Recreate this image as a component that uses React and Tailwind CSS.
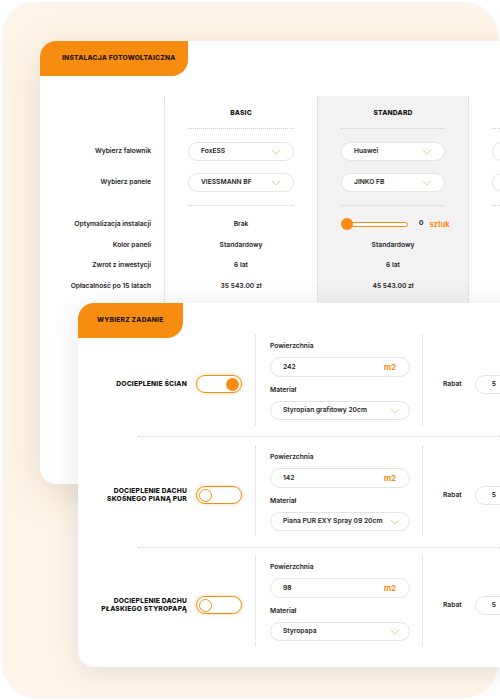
import React from "react";

const Chevron = () => (
  <svg width="10" height="6" viewBox="0 0 10 6" fill="none">
    <path d="M1 1l4 4 4-4" stroke="#f8c88a" strokeWidth="1" />
  </svg>
);

const Select = ({ value }) => (
  <div className="flex h-[19px] items-center justify-between rounded-full border border-[#e4e4e4] bg-white pl-[12px] pr-[12px] text-[6.7px] font-semibold text-[#222]">
    <span>{value}</span>
    <Chevron />
  </div>
);

const FieldSelect = ({ value }) => (
  <div className="flex h-[19px] w-[140px] items-center justify-between rounded-full border border-[#e4e4e4] bg-white pl-[12px] pr-[9px] text-[6.7px] font-semibold text-[#222]">
    <span>{value}</span>
    <Chevron />
  </div>
);

const statRows = (values) =>
  values.map((v, i) => (
    <div key={i} className="flex h-[20.5px] items-center justify-center text-[6.7px] font-semibold text-[#222]">
      {v}
    </div>
  ));

const Slider = () => (
  <div className="flex h-[20.5px] items-center px-[23px]">
    <div className="relative flex items-center">
      <div className="ml-[6px] h-[5px] w-[61px] rounded-full border border-[#f78d10] bg-white" />
      <div className="absolute left-0 top-1/2 h-[12px] w-[12px] -translate-y-1/2 rounded-full bg-[#f78d10]" />
    </div>
    <span className="ml-[11px] text-[6.5px] font-bold text-[#222]">0</span>
    <span className="ml-[6px] text-[7.5px] font-bold text-[#f78d10]">sztuk</span>
  </div>
);

const PlanColumn = ({ title, selects, stats, gray }) => (
  <div
    className={`w-[152px] shrink-0 pb-[10px] ${
      gray ? "border-x border-dotted border-[#d4d4d4] bg-[#f2f2f2]" : ""
    }`}
  >
    <div className="flex h-[32px] items-center justify-center pt-[3px] text-[6.7px] font-extrabold tracking-[0.2px] text-[#111]">
      {title}
    </div>
    <div className="mx-[23px] border-t border-dotted border-[#cfcfcf]" />
    <div className="flex flex-col gap-[12px] px-[23px] py-[13px]">
      <Select value={selects[0]} />
      <Select value={selects[1]} />
    </div>
    <div className="mx-[23px] border-t border-dotted border-[#cfcfcf]" />
    <div className="pt-[8px]">{stats}</div>
  </div>
);

const Toggle = ({ on }) => (
  <div
    className={`flex h-[18px] w-[46px] shrink-0 items-center rounded-full border-[1.5px] border-[#f78d10] bg-white px-[1.5px] shadow-[0_0_4px_rgba(247,141,16,0.35)] ${
      on ? "justify-end" : "justify-start"
    }`}
  >
    {on ? (
      <div className="mr-[1px] h-[13px] w-[13px] rounded-full bg-[#f78d10]" />
    ) : (
      <div className="h-[13px] w-[13px] rounded-full border-[1.5px] border-[#f78d10] bg-white" />
    )}
  </div>
);

const TaskRow = ({ label, on, area, material }) => (
  <div className="flex h-[90px]">
    <div className="flex w-[178px] shrink-0 items-center justify-end gap-[9px] border-r border-dotted border-[#d4d4d4] pr-[13px] pt-[8px]">
      <div className="text-right text-[6.7px] font-extrabold uppercase leading-[8px] tracking-[0.2px] text-[#111]">
        {label}
      </div>
      <Toggle on={on} />
    </div>
    <div className="w-[167px] shrink-0 border-r border-dotted border-[#d4d4d4] pl-[14px] pt-[6px]">
      <div className="h-[10px] text-[6.7px] font-semibold leading-[10px] text-[#222]">Powierzchnia</div>
      <div className="mt-[6px] flex h-[20px] w-[140px] items-center justify-between rounded-full border border-[#e4e4e4] bg-white pl-[12px] pr-[13px]">
        <span className="text-[6.7px] font-semibold text-[#222]">{area}</span>
        <span className="text-[8px] font-bold text-[#f78d10]">m2</span>
      </div>
      <div className="mt-[8px] h-[10px] text-[6.7px] font-semibold leading-[10px] text-[#222]">Materiał</div>
      <div className="mt-[6px]">
        <FieldSelect value={material} />
      </div>
    </div>
    <div className="flex items-center pl-[20px] pt-[8px]">
      <span className="text-[6.7px] font-semibold text-[#222]">Rabat</span>
      <div className="ml-[13px] flex h-[19px] w-[70px] items-center rounded-full border border-[#e4e4e4] bg-white pl-[16px]">
        <span className="text-[6.7px] font-semibold text-[#222]">5</span>
        <svg className="ml-[6px]" width="8" height="6" viewBox="0 0 8 6" fill="none">
          <path d="M1 1l3 4 3-4" stroke="#f78d10" strokeWidth="1.5" />
        </svg>
      </div>
    </div>
  </div>
);

export default function App() {
  return (
    <div className="h-[700px] w-[500px] overflow-hidden bg-white p-[2px] [font-family:Inter,'Liberation_Sans',sans-serif]">
      <div className="h-full rounded-[34px] bg-[#fdf5ea] pl-[38px] pt-[39px]">
        {/* fotowoltaika */}
        <div className="h-[443px] w-[520px] rounded-l-[16px] bg-white shadow-[0_10px_40px_rgba(140,95,40,0.18)]">
          <div className="flex h-[35px] w-[148px] items-center rounded-tl-[16px] rounded-br-[16px] bg-[#f78d10] pl-[22px] text-[6.7px] font-extrabold tracking-[0.2px] text-[#2b1400]">
            INSTALACJA FOTOWOLTAICZNA
          </div>
          <div className="mt-[20px] flex">
            <div className="w-[125px] shrink-0 border-r border-dotted border-[#d4d4d4] pb-[10px] pr-[13px] text-right text-[6.7px] font-semibold text-[#222]">
              <div className="h-[32px]" />
              <div className="border-t border-transparent" />
              <div className="flex flex-col gap-[12px] py-[13px]">
                <div className="flex h-[19px] items-center justify-end">Wybierz falownik</div>
                <div className="flex h-[19px] items-center justify-end">Wybierz panele</div>
              </div>
              <div className="border-t border-transparent" />
              <div className="pt-[8px]">
                {["Optymalizacja instalacji", "Kolor paneli", "Zwrot z inwestycji", "Opłacalność po 15 latach"].map((t) => (
                  <div key={t} className="flex h-[20.5px] items-center justify-end">
                    {t}
                  </div>
                ))}
              </div>
            </div>
            <PlanColumn
              title="BASIC"
              selects={["FoxESS", "VIESSMANN BF"]}
              stats={statRows(["Brak", "Standardowy", "6 lat", "35 543.00 zł"])}
            />
            <PlanColumn
              title="STANDARD"
              gray
              selects={["Huawei", "JINKO FB"]}
              stats={
                <>
                  <Slider />
                  {statRows(["Standardowy", "6 lat", "45 543.00 zł"])}
                </>
              }
            />
            <PlanColumn title="" selects={["", ""]} stats={statRows(["", "", "", ""])} />
          </div>
        </div>

        {/* zadania */}
        <div className="relative z-10 ml-[38px] mt-[-181px] h-[364px] w-[440px] rounded-l-[16px] bg-white shadow-[0_4px_30px_rgba(0,0,0,0.1)]">
          <div className="flex h-[35px] w-[105px] items-center rounded-tl-[16px] rounded-br-[16px] bg-[#f78d10] pl-[19px] text-[6.7px] font-extrabold tracking-[0.2px] text-[#2b1400]">
            WYBIERZ ZADANIE
          </div>
          <div className="mt-[-3px]">
            <TaskRow label="Docieplenie ścian" on area="242" material="Styropian grafitowy 20cm" />
            <div className="ml-[60px] mt-[11px] border-t border-dotted border-[#cfcfcf]" />
            <div className="mt-[9px]">
              <TaskRow
                label={
                  <>
                    Docieplenie dachu
                    <br />
                    skośnego pianą PUR
                  </>
                }
                area="142"
                material="Piana PUR EXY Spray 09 20cm"
              />
            </div>
            <div className="ml-[60px] mt-[11px] border-t border-dotted border-[#cfcfcf]" />
            <div className="mt-[8px]">
              <TaskRow
                label={
                  <>
                    Docieplenie dachu
                    <br />
                    płaskiego styropapą
                  </>
                }
                area="98"
                material="Styropapa"
              />
            </div>
          </div>
        </div>
      </div>
    </div>
  );
}
